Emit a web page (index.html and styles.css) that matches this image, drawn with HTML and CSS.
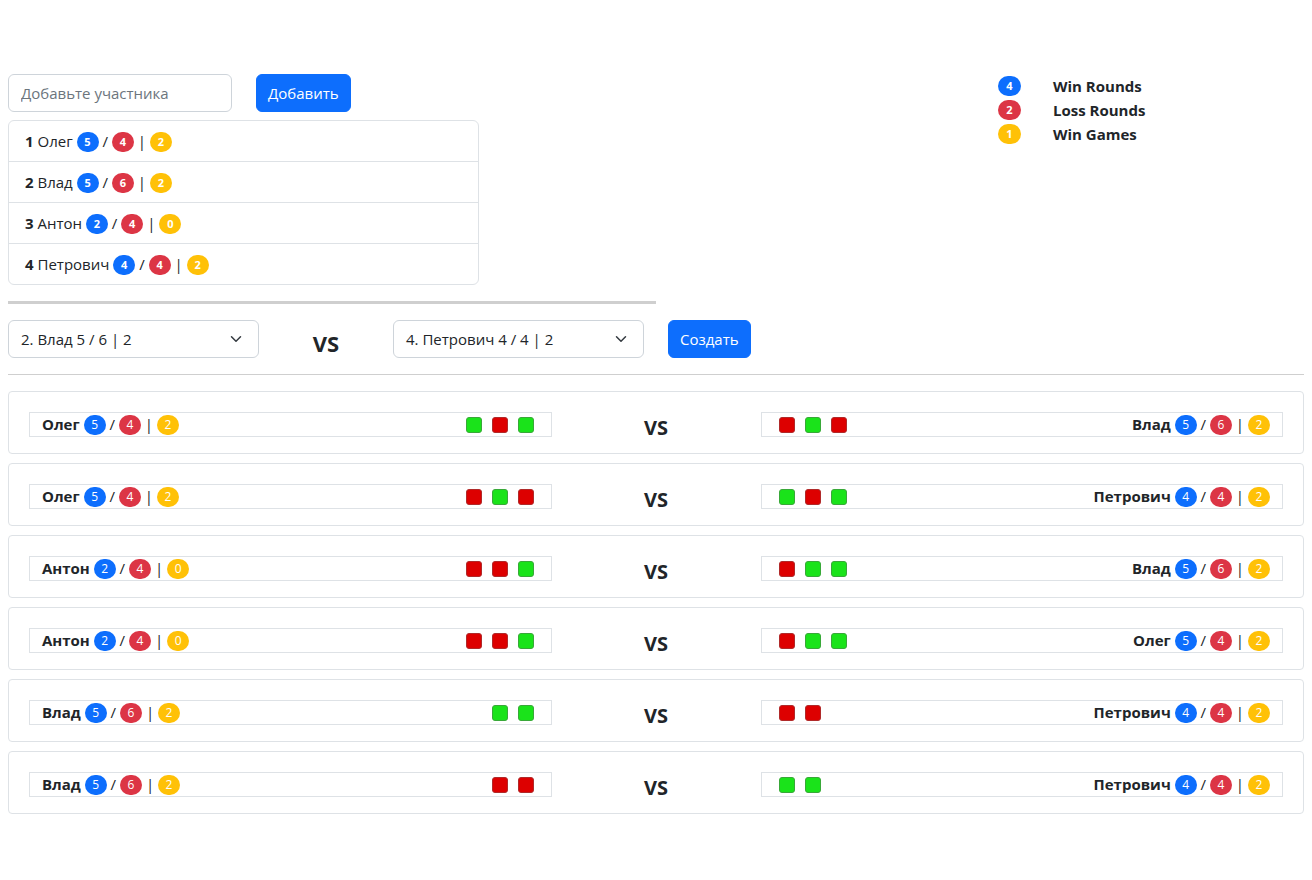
FILE: index.html
```html
<!DOCTYPE html>
<html lang="ru">
<head>
<meta charset="utf-8">
<title>Турнир</title>
<link rel="stylesheet" href="styles.css">
</head>
<body>
<div class="page">
  <div class="top">
    <div class="left">
      <div class="add-row">
        <input class="form-control add-input" type="text" placeholder="Добавьте участника">
        <button class="btn">Добавить</button>
      </div>
      <ul class="list">
        <li class="list-item"><b>1</b> Олег <span class="badge b-blue">5</span> / <span class="badge b-red">4</span> | <span class="badge b-yellow">2</span></li>
        <li class="list-item"><b>2</b> Влад <span class="badge b-blue">5</span> / <span class="badge b-red">6</span> | <span class="badge b-yellow">2</span></li>
        <li class="list-item"><b>3</b> Антон <span class="badge b-blue">2</span> / <span class="badge b-red">4</span> | <span class="badge b-yellow">0</span></li>
        <li class="list-item"><b>4</b> Петрович <span class="badge b-blue">4</span> / <span class="badge b-red">4</span> | <span class="badge b-yellow">2</span></li>
      </ul>
    </div>
    <div class="legend">
      <div class="legend-row"><span class="badge b-blue">4</span><span class="legend-text">Win Rounds</span></div>
      <div class="legend-row"><span class="badge b-red">2</span><span class="legend-text">Loss Rounds</span></div>
      <div class="legend-row"><span class="badge b-yellow">1</span><span class="legend-text">Win Games</span></div>
    </div>
  </div>
  <hr class="thick">
  <div class="create-row">
    <div class="select">2. Влад 5 / 6 | 2<svg class="chev" viewBox="0 0 16 16" width="16" height="16"><path d="M2 5l6 6 6-6" fill="none" stroke="#343a40" stroke-width="2" stroke-linecap="round" stroke-linejoin="round"/></svg></div>
    <div class="vs-big">VS</div>
    <div class="select">4. Петрович 4 / 4 | 2<svg class="chev" viewBox="0 0 16 16" width="16" height="16"><path d="M2 5l6 6 6-6" fill="none" stroke="#343a40" stroke-width="2" stroke-linecap="round" stroke-linejoin="round"/></svg></div>
    <button class="btn create-btn">Создать</button>
  </div>
  <hr class="thin">
  <div class="matches">
    <div class="match">
      <div class="side left-side"><span class="pname"><b>Олег</b> <span class="badge b-blue">5</span> / <span class="badge b-red">4</span> | <span class="badge b-yellow">2</span></span><span class="sq-group"><i class="sq g"></i><i class="sq r"></i><i class="sq g"></i></span></div>
      <div class="vs">VS</div>
      <div class="side right-side"><span class="sq-group"><i class="sq r"></i><i class="sq g"></i><i class="sq r"></i></span><span class="pname"><b>Влад</b> <span class="badge b-blue">5</span> / <span class="badge b-red">6</span> | <span class="badge b-yellow">2</span></span></div>
    </div>
    <div class="match">
      <div class="side left-side"><span class="pname"><b>Олег</b> <span class="badge b-blue">5</span> / <span class="badge b-red">4</span> | <span class="badge b-yellow">2</span></span><span class="sq-group"><i class="sq r"></i><i class="sq g"></i><i class="sq r"></i></span></div>
      <div class="vs">VS</div>
      <div class="side right-side"><span class="sq-group"><i class="sq g"></i><i class="sq r"></i><i class="sq g"></i></span><span class="pname"><b>Петрович</b> <span class="badge b-blue">4</span> / <span class="badge b-red">4</span> | <span class="badge b-yellow">2</span></span></div>
    </div>
    <div class="match">
      <div class="side left-side"><span class="pname"><b>Антон</b> <span class="badge b-blue">2</span> / <span class="badge b-red">4</span> | <span class="badge b-yellow">0</span></span><span class="sq-group"><i class="sq r"></i><i class="sq r"></i><i class="sq g"></i></span></div>
      <div class="vs">VS</div>
      <div class="side right-side"><span class="sq-group"><i class="sq r"></i><i class="sq g"></i><i class="sq g"></i></span><span class="pname"><b>Влад</b> <span class="badge b-blue">5</span> / <span class="badge b-red">6</span> | <span class="badge b-yellow">2</span></span></div>
    </div>
    <div class="match">
      <div class="side left-side"><span class="pname"><b>Антон</b> <span class="badge b-blue">2</span> / <span class="badge b-red">4</span> | <span class="badge b-yellow">0</span></span><span class="sq-group"><i class="sq r"></i><i class="sq r"></i><i class="sq g"></i></span></div>
      <div class="vs">VS</div>
      <div class="side right-side"><span class="sq-group"><i class="sq r"></i><i class="sq g"></i><i class="sq g"></i></span><span class="pname"><b>Олег</b> <span class="badge b-blue">5</span> / <span class="badge b-red">4</span> | <span class="badge b-yellow">2</span></span></div>
    </div>
    <div class="match">
      <div class="side left-side"><span class="pname"><b>Влад</b> <span class="badge b-blue">5</span> / <span class="badge b-red">6</span> | <span class="badge b-yellow">2</span></span><span class="sq-group"><i class="sq g"></i><i class="sq g"></i></span></div>
      <div class="vs">VS</div>
      <div class="side right-side"><span class="sq-group"><i class="sq r"></i><i class="sq r"></i></span><span class="pname"><b>Петрович</b> <span class="badge b-blue">4</span> / <span class="badge b-red">4</span> | <span class="badge b-yellow">2</span></span></div>
    </div>
    <div class="match">
      <div class="side left-side"><span class="pname"><b>Влад</b> <span class="badge b-blue">5</span> / <span class="badge b-red">6</span> | <span class="badge b-yellow">2</span></span><span class="sq-group"><i class="sq r"></i><i class="sq r"></i></span></div>
      <div class="vs">VS</div>
      <div class="side right-side"><span class="sq-group"><i class="sq g"></i><i class="sq g"></i></span><span class="pname"><b>Петрович</b> <span class="badge b-blue">4</span> / <span class="badge b-red">4</span> | <span class="badge b-yellow">2</span></span></div>
    </div>
  </div>
</div>
</body>
</html>
```

FILE: styles.css
```css
* { box-sizing: border-box; }
body {
  margin: 0;
  padding: 74px 8px 8px 8px;
  font-family: "Open Sans", "Noto Sans", sans-serif;
  font-size: 15px;
  line-height: 24px;
  color: #212529;
  background: #fff;
}
.page { width: 1296px; }
.top { display: flex; }
.left { width: 648px; }
.add-row { display: flex; gap: 24px; margin-bottom: 8px; }
.form-control {
  width: 224px;
  height: 38px;
  border: 1px solid #ced4da;
  border-radius: 6px;
  padding: 6px 12px;
  font-family: inherit;
  font-size: 15px;
  color: #212529;
}
.form-control::placeholder { color: #6c757d; }
.btn {
  height: 38px;
  background: #0d6efd;
  color: #fff;
  border: 1px solid #0d6efd;
  border-radius: 6px;
  padding: 6px 11px;
  font-family: inherit;
  font-size: 15px;
  line-height: 24px;
}
.list {
  list-style: none;
  margin: 0;
  padding: 0;
  width: 471px;
  border: 1px solid #dee2e6;
  border-radius: 6px;
}
.list-item {
  height: 41px;
  padding: 8px 16px;
  border-top: 1px solid #dee2e6;
  white-space: pre;
}
.list-item:first-child { border-top: none; height: 40px; }
.badge {
  display: inline-block;
  vertical-align: middle;
  text-align: center;
  min-width: 22px;
  height: 20px;
  padding: 0 7px;
  border-radius: 10px;
  color: #fff;
  font-size: 11px;
  font-weight: 700;
  line-height: 20px;
  position: relative;
  top: -1px;
}
.b-blue { background: #0d6efd; }
.b-red { background: #dc3545; }
.b-yellow { background: #ffc107; }
.legend { margin-left: 342px; }
.legend-row { display: flex; align-items: center; height: 24px; }
.legend-row .badge { min-width: 23px; top: 0; }
.legend-text { margin-left: 32px; font-weight: 700; font-size: 15px; }
hr { border: none; margin: 0; }
.thick { width: 648px; height: 3px; background: #cfcfcf; margin: 16px 0 16px 0; }
.thin { height: 1px; background: #cfcfcf; margin: 16px 0 16px 0; }
.create-row { display: flex; align-items: center; }
.select {
  width: 251px;
  height: 38px;
  border: 1px solid #ced4da;
  border-radius: 6px;
  padding: 6px 12px;
  display: flex;
  align-items: center;
  justify-content: space-between;
  font-size: 15px;
}
.chev { width: 12px; height: 12px; margin-right: 4px; }
.vs-big { width: 134px; text-align: center; font-weight: 700; font-size: 22px; padding-top: 8px; }
.create-btn { margin-left: 24px; }
.matches { display: flex; flex-direction: column; gap: 9px; }
.match {
  border: 1px solid #dee2e6;
  border-radius: 4px;
  padding: 20px 20px 16px 20px;
  display: grid;
  grid-template-columns: 5fr 2fr 5fr;
  align-items: start;
}
.side {
  height: 25px;
  border: 1px solid #dee2e6;
  display: flex;
  align-items: center;
  justify-content: space-between;
}
.left-side { padding: 0 17px 0 12px; }
.right-side { padding: 0 12px 0 17px; }
.pname { font-size: 15px; white-space: pre; line-height: 23px; }
.pname .badge { font-weight: 400; font-size: 12px; }
.sq-group { display: flex; gap: 10px; }
.sq { display: block; width: 16px; height: 16px; border-radius: 3px; }
.sq.g { background: #1ae31a; border: 1px solid #39a839; }
.sq.r { background: #dd0000; border: 1px solid #b02a2a; }
.vs { height: 25px; text-align: center; font-weight: 700; font-size: 20px; padding-top: 6px; line-height: 19px; }
```
